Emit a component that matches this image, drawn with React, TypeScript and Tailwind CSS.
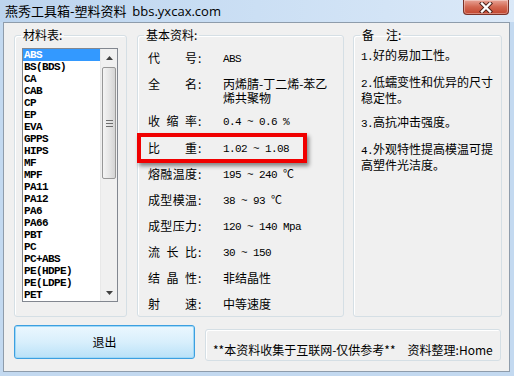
import React from "react";

const mono = "font-['Liberation_Mono','Noto_Sans_CJK_SC',monospace] text-[11px] tracking-[-0.6px]";

const materials = [
  "ABS", "BS(BDS)", "CA", "CAB", "CP", "EP", "EVA", "GPPS", "HIPS", "MF", "MPF",
  "PA11", "PA12", "PA6", "PA66", "PBT", "PC", "PC+ABS", "PE(HDPE)", "PE(LDPE)", "PET",
];

function Label({ chars }: { chars: string[] }) {
  return (
    <div className="w-[75px] flex items-center shrink-0">
      <div className="w-[49px] flex justify-between">
        {chars.map((c, i) => (
          <span key={i}>{c}</span>
        ))}
      </div>
      <span className="ml-[1px]">:</span>
    </div>
  );
}

function Row({ chars, children, h = "h-[26px]" }: { chars: string[]; children: React.ReactNode; h?: string }) {
  return (
    <div className={`flex items-center pl-[10px] ${h}`}>
      <Label chars={chars} />
      <div>{children}</div>
    </div>
  );
}

function Group({ title, className, children }: { title: string; className: string; children: React.ReactNode }) {
  return (
    <fieldset className={`border border-[#d5dfe5] rounded-[3px] shadow-[inset_1px_1px_0_#ffffff] ${className}`}>
      <legend className="ml-[6px] px-[2px] text-[12px] leading-[14px]">{title}</legend>
      {children}
    </fieldset>
  );
}

function Arrow({ up }: { up?: boolean }) {
  return (
    <svg width="7" height="4" viewBox="0 0 7 4">
      <path d={up ? "M0 4 L3.5 0 L7 4 Z" : "M0 0 L3.5 4 L7 0 Z"} fill="#404040" />
    </svg>
  );
}

export default function App() {
  return (
    <div className="w-[514px] h-[376px] flex flex-col overflow-hidden bg-[#c3d9f0] text-black font-['Noto_Sans_CJK_SC',sans-serif]">
      {/* title bar */}
      <div className="h-[22px] flex items-start justify-between bg-gradient-to-r from-[#bcd4ee] via-[#cbdff4] to-[#dbe9f8]">
        <div className="pl-[5px] pt-[2px] text-[13px] leading-[17px] whitespace-nowrap">
          燕秀工具箱-塑料资料&nbsp;&nbsp;<span className="font-['Open_Sans',sans-serif]">bbs.yxcax.com</span>
        </div>
        <div className="mr-[5px] w-[46px] h-[15px] rounded-b-[4px] border border-t-0 border-[#7a3228] bg-gradient-to-b from-[#e7a396] via-[#d26650] to-[#c2442d] shadow-[inset_0_0_0_1px_rgba(255,255,255,0.35)] flex items-center justify-center">
          <svg width="14" height="11" viewBox="0 0 14 11">
            <path d="M3 1.5 L11 9.5 M11 1.5 L3 9.5" stroke="#4a2019" strokeWidth="4.2" strokeLinecap="square" />
            <path d="M3 1.5 L11 9.5 M11 1.5 L3 9.5" stroke="#ffffff" strokeWidth="2.4" strokeLinecap="square" />
          </svg>
        </div>
      </div>

      {/* client area */}
      <div className="ml-[3px] w-[507px] h-[350px] border border-[#8e9cab] bg-[#f0f0f0] flex flex-col pl-[10px] pt-[5px] text-[12px]">
        <div className="flex">
          {/* materials */}
          <Group title="材料表:" className="w-[113px] h-[289px]">
            <div className="ml-[7px] mt-[6px] w-[96px] h-[254px] border border-[#828790] bg-white flex">
              <div className={`w-[77px] ${mono} font-bold leading-[12px]`}>
                {materials.map((m, i) => (
                  <div key={m} className={`h-[12px] pl-[1px] whitespace-nowrap ${i === 0 ? "bg-[#3399ff] text-white" : ""}`}>
                    {m}
                  </div>
                ))}
              </div>
              <div className="w-[17px] flex flex-col bg-[#f0f0f0] border-l border-[#e8e8e8]">
                <div className="h-[17px] flex items-center justify-center">
                  <Arrow up />
                </div>
                <div className="mx-[1px] mt-[1px] h-[112px] rounded-[2px] border border-[#979797] bg-gradient-to-r from-[#f4f4f4] via-[#e6e6e6] to-[#d4d4d4] flex flex-col items-center justify-center gap-[2px]">
                  <div className="w-[7px] h-[1px] bg-[#6f6f6f]" />
                  <div className="w-[7px] h-[1px] bg-[#6f6f6f]" />
                  <div className="w-[7px] h-[1px] bg-[#6f6f6f]" />
                </div>
                <div className="flex-1" />
                <div className="h-[17px] flex items-center justify-center">
                  <Arrow />
                </div>
              </div>
            </div>
          </Group>

          {/* basic data */}
          <Group title="基本资料:" className="ml-[10px] w-[207px] h-[289px]">
            <div className="relative mt-[3px]">
              <Row chars={["代", "号"]}>
                <span className={mono}>ABS</span>
              </Row>
              <div className="flex pl-[10px] h-[37px] pt-[6px]">
                <div className="h-[14px] flex items-center leading-[14px]">
                  <Label chars={["全", "名"]} />
                </div>
                <div className="whitespace-nowrap flex flex-col">
                  <div className="h-[14px] leading-[14px]">丙烯腈-丁二烯-苯乙</div>
                  <div className="h-[13px] leading-[13px]">烯共聚物</div>
                </div>
              </div>
              <Row chars={["收", "缩", "率"]}>
                <span className={mono}>0.4 ~ 0.6 %</span>
              </Row>
              <Row chars={["比", "重"]} h="h-[27px]">
                <span className={mono}>1.02 ~ 1.08</span>
              </Row>
              <Row chars={["熔", "融", "温", "度"]}>
                <span className={mono}>195 ~ 240 ℃</span>
              </Row>
              <Row chars={["成", "型", "模", "温"]}>
                <span className={mono}>38 ~ 93 ℃</span>
              </Row>
              <Row chars={["成", "型", "压", "力"]}>
                <span className={mono}>120 ~ 140 Mpa</span>
              </Row>
              <Row chars={["流", "长", "比"]}>
                <span className={mono}>30 ~ 150</span>
              </Row>
              <Row chars={["结", "晶", "性"]}>非结晶性</Row>
              <Row chars={["射", "速"]}>中等速度</Row>

              {/* red highlight */}
              <div className="absolute left-[-1px] top-[88px] w-[170px] h-[30px] border-[4px] border-[#f00000] shadow-[2px_3px_4px_rgba(0,0,0,0.45)]" />
            </div>
          </Group>

          {/* notes */}
          <Group title="备　注:" className="ml-[9px] w-[149px] h-[289px]">
            <div className="pl-[7px] mt-[6px] flex flex-col gap-[11px] leading-[13px] whitespace-nowrap">
              <div><span className={mono}>1.</span>好的易加工性。</div>
              <div>
                <span className={mono}>2.</span>低蠕变性和优异的尺寸
                <br />
                稳定性。
              </div>
              <div><span className={mono}>3.</span>高抗冲击强度。</div>
              <div>
                <span className={mono}>4.</span>外观特性提高模温可提
                <br />
                高塑件光洁度。
              </div>
            </div>
          </Group>
        </div>

        {/* bottom row */}
        <div className="flex items-start mt-[8px]">
          <button className="w-[181px] h-[34px] rounded-[3px] border border-[#3c9fe0] bg-gradient-to-b from-[#ebf7fe] via-[#d8effc] to-[#b9e1f8] shadow-[inset_0_0_0_1px_#9fd8f7] text-[12px] leading-[14px]">
            退出
          </button>
          <div className="ml-[10px] mt-[4px] w-[296px] h-[32px] rounded-[3px] border border-[#d5dfe5] shadow-[inset_1px_1px_0_#ffffff] pl-[7px] pt-[13px] leading-[13px] whitespace-nowrap">
            **本资料收集于互联网-仅供参考**　资料整理:Home
          </div>
        </div>
      </div>
    </div>
  );
}
